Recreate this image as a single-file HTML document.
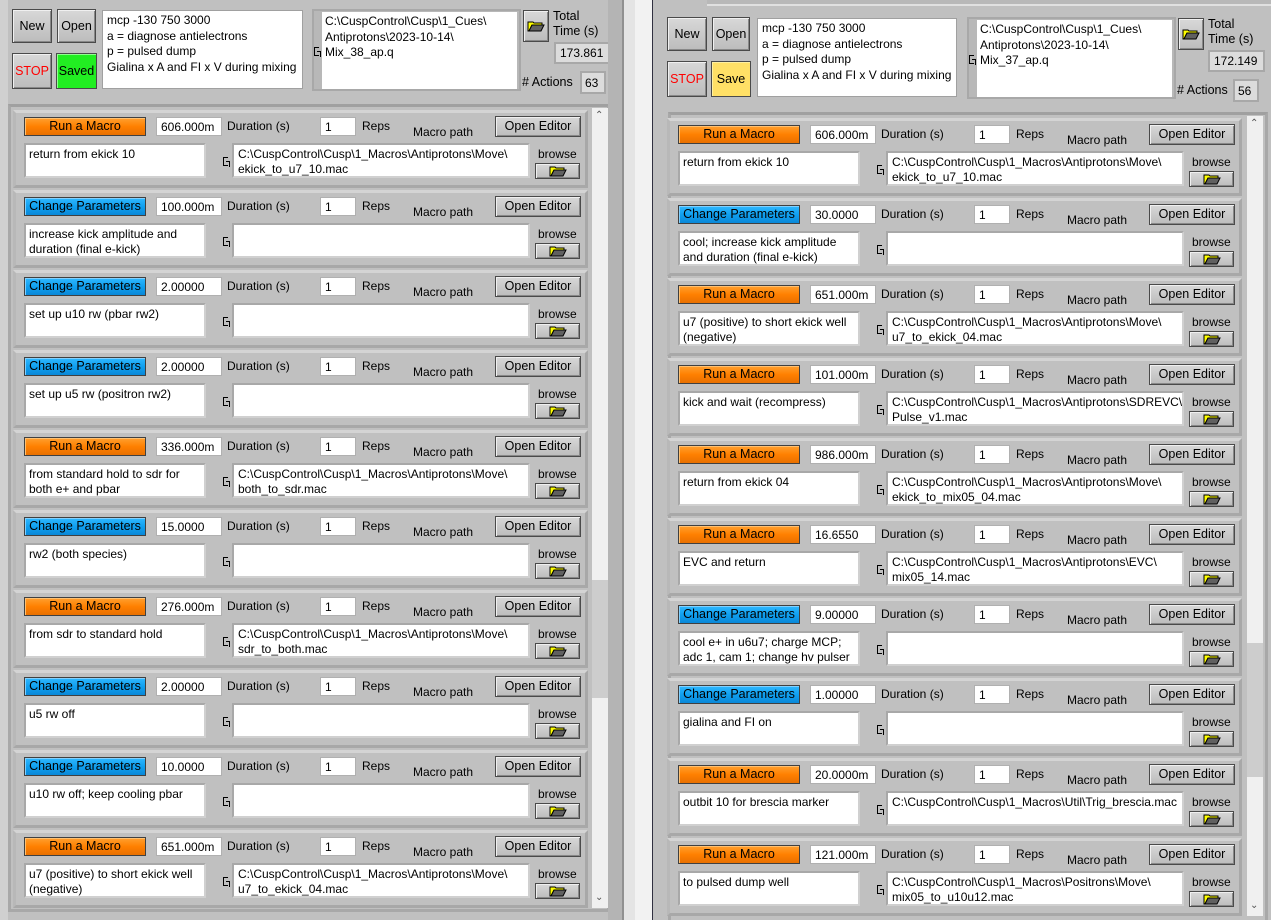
<!DOCTYPE html><html style="height:920px;overflow:hidden"><head><meta charset="utf-8"><style>
*{box-sizing:border-box;margin:0;padding:0}
body{width:1271px;height:920px;overflow:hidden;background:#c0c0c0;font-family:"Liberation Sans",sans-serif;font-size:12px;color:#000;position:relative}
.a{position:absolute}
.win{position:absolute;top:0;height:920px;background:#c0c0c0}
.btn{position:absolute;background:linear-gradient(#d8d8d8,#bcbcbc);border:1px solid #4a4a4a;box-shadow:inset 1px 1px 0 #f0f0f0,inset -1px -1px 0 #888;text-align:center;font-size:12.5px}
.box{position:absolute;background:#fff;border:1px solid #a0a0a0;padding:2px 4px;line-height:15.5px;white-space:nowrap;overflow:hidden}
.row{position:absolute;width:575px;height:78px;background:#c0c0c0;border:3px solid #a8a8a8;border-top-color:#d4d4d4;border-left-color:#b8b8b8}
.row>*{position:absolute}
.k{left:8px;top:4px;width:122px;height:19px;line-height:17px;text-align:center;font-size:12.5px;border:1px solid #404040}
.run{background:linear-gradient(#ffa030,#ff8000 50%,#e87000);box-shadow:inset 1px 1px 0 #ffc070}
.chg{background:linear-gradient(#30b8ff,#10a0f0 50%,#0a88d8);box-shadow:inset 1px 1px 0 #80d0ff}
.dur{left:140px;top:4px;width:66px;height:19px;background:#fff;padding:2px 4px;border:1px solid #b0b0b0}
.dl{left:211px;top:6px}
.rep{left:304px;top:4px;width:36px;height:19px;background:#fff;padding:2px 4px;border:1px solid #b0b0b0}
.rl{left:346px;top:6px}
.mp{left:397px;top:12px}
.oe{left:479px;top:3px;width:86px;height:21px;line-height:19px}
.desc{left:8px;top:30px;width:182px;height:35px;background:#fff;padding:2px 3px;line-height:15px;border:2px solid #a8a8a8;border-right-color:#d0d0d0;border-bottom-color:#d0d0d0}
.ic{left:207px;top:44px;width:5px;height:9px;border:1px solid #000;border-width:1px 0 1px 1px}
.ic:after{content:"";position:absolute;left:2px;top:3px;width:3px;height:5px;border:1px solid #000;border-width:1px 1px 0 0}
.path{left:216px;top:30px;width:298px;height:35px;background:#fff;padding:2px 4px;line-height:15px;border:2px solid #a8a8a8;border-right-color:#d0d0d0;border-bottom-color:#d0d0d0;white-space:nowrap;overflow:hidden}
.bl{left:522px;top:34px}
.fb{left:519px;top:50px;width:45px;height:16px}
.fb svg{position:absolute;left:13px;top:2px}
.sb{position:absolute;width:16px;background:#f0f0f0}
.th{position:absolute;left:0;width:16px;background:#cdcdcd}
.ar{position:absolute;left:3px;font-size:10px;color:#555}
</style></head><body>
<svg width="0" height="0" style="position:absolute"><defs><symbol id="f" viewBox="0 0 18 11"><path d="M1 1h5l1 1h8v2H5L2 10H1z" fill="#ffff00" stroke="#000" stroke-width="1"/><path d="M2 10l3-6h12l-3 6z" fill="#606060" stroke="#000" stroke-width="1"/></symbol></defs></svg>

<div class="win" style="left:0;width:622px;border-left:8px solid #d0d0d0"></div>
<div class="btn" style="left:12px;top:9px;width:40px;height:34px;line-height:32px">New</div>
<div class="btn" style="left:57px;top:9px;width:39px;height:34px;line-height:32px">Open</div>
<div class="btn" style="left:12px;top:53px;width:40px;height:36px;line-height:34px;color:#f00">STOP</div>
<div class="btn" style="left:56px;top:53px;width:41px;height:36px;line-height:34px;background:#22ee22;box-shadow:inset 1px 1px 0 #90ff90">Saved</div>
<div class="box" style="left:102px;top:10px;width:201px;height:79px">mcp -130 750 3000<br>a = diagnose antielectrons<br>p = pulsed dump<br>Gialina x A and FI x V during mixing</div>
<div class="a" style="left:312px;top:9px;width:209px;height:82px;background:#b8b8b8;border:2px solid #a8a8a8"></div>
<div class="a" style="left:322px;top:12px;width:195px;height:77px;background:#fff;padding:2px 3px;line-height:15.5px">C:\CuspControl\Cusp\1_Cues\<br>Antiprotons\2023-10-14\<br>Mix_38_ap.q</div>
<div class="a ic" style="left:314px;top:47px"></div>
<div class="btn" style="left:523px;top:10px;width:26px;height:32px"><svg width="18" height="11" style="margin-top:10px"><use href="#f"/></svg></div>
<div class="a" style="left:553px;top:9px;line-height:15px;font-size:12.5px">Total<br>Time (s)</div>
<div class="a" style="left:554px;top:42px;width:57px;height:22px;background:#dcdcdc;border:2px solid #a8a8a8;padding:2px 4px">173.861</div>
<div class="a" style="left:522px;top:75px;font-size:12.5px"># Actions</div>
<div class="a" style="left:580px;top:71px;width:26px;height:23px;background:#dcdcdc;border:2px solid #a8a8a8;padding:3px 3px">63</div>
<div class="a" style="left:8px;top:104px;width:602px;height:808px;border:3px solid #a8a8a8;border-top-color:#a0a0a0"></div>
<div class="sb" style="left:592px;top:108px;height:800px"><div class="th" style="top:472px;height:118px"></div><div class="ar" style="top:2px">&#8963;</div><div class="ar" style="top:784px">&#8964;</div></div>

<div class="row" style="left:13px;top:110px"><div class="k run">Run a Macro</div><div class="dur">606.000m</div><div class="dl">Duration (s)</div><div class="rep">1</div><div class="rl">Reps</div><div class="mp">Macro path</div><div class="btn oe">Open Editor</div><div class="desc">return from ekick 10</div><div class="ic"></div><div class="path">C:\CuspControl\Cusp\1_Macros\Antiprotons\Move\<br>ekick_to_u7_10.mac</div><div class="bl">browse</div><div class="btn fb"><svg width="18" height="11"><use href="#f"/></svg></div></div>
<div class="row" style="left:13px;top:190px"><div class="k chg">Change Parameters</div><div class="dur">100.000m</div><div class="dl">Duration (s)</div><div class="rep">1</div><div class="rl">Reps</div><div class="mp">Macro path</div><div class="btn oe">Open Editor</div><div class="desc">increase kick amplitude and<br>duration (final e-kick)</div><div class="ic"></div><div class="path"></div><div class="bl">browse</div><div class="btn fb"><svg width="18" height="11"><use href="#f"/></svg></div></div>
<div class="row" style="left:13px;top:270px"><div class="k chg">Change Parameters</div><div class="dur">2.00000</div><div class="dl">Duration (s)</div><div class="rep">1</div><div class="rl">Reps</div><div class="mp">Macro path</div><div class="btn oe">Open Editor</div><div class="desc">set up u10 rw (pbar rw2)</div><div class="ic"></div><div class="path"></div><div class="bl">browse</div><div class="btn fb"><svg width="18" height="11"><use href="#f"/></svg></div></div>
<div class="row" style="left:13px;top:350px"><div class="k chg">Change Parameters</div><div class="dur">2.00000</div><div class="dl">Duration (s)</div><div class="rep">1</div><div class="rl">Reps</div><div class="mp">Macro path</div><div class="btn oe">Open Editor</div><div class="desc">set up u5 rw (positron rw2)</div><div class="ic"></div><div class="path"></div><div class="bl">browse</div><div class="btn fb"><svg width="18" height="11"><use href="#f"/></svg></div></div>
<div class="row" style="left:13px;top:430px"><div class="k run">Run a Macro</div><div class="dur">336.000m</div><div class="dl">Duration (s)</div><div class="rep">1</div><div class="rl">Reps</div><div class="mp">Macro path</div><div class="btn oe">Open Editor</div><div class="desc">from standard hold to sdr for<br>both e+ and pbar</div><div class="ic"></div><div class="path">C:\CuspControl\Cusp\1_Macros\Antiprotons\Move\<br>both_to_sdr.mac</div><div class="bl">browse</div><div class="btn fb"><svg width="18" height="11"><use href="#f"/></svg></div></div>
<div class="row" style="left:13px;top:510px"><div class="k chg">Change Parameters</div><div class="dur">15.0000</div><div class="dl">Duration (s)</div><div class="rep">1</div><div class="rl">Reps</div><div class="mp">Macro path</div><div class="btn oe">Open Editor</div><div class="desc">rw2 (both species)</div><div class="ic"></div><div class="path"></div><div class="bl">browse</div><div class="btn fb"><svg width="18" height="11"><use href="#f"/></svg></div></div>
<div class="row" style="left:13px;top:590px"><div class="k run">Run a Macro</div><div class="dur">276.000m</div><div class="dl">Duration (s)</div><div class="rep">1</div><div class="rl">Reps</div><div class="mp">Macro path</div><div class="btn oe">Open Editor</div><div class="desc">from sdr to standard hold</div><div class="ic"></div><div class="path">C:\CuspControl\Cusp\1_Macros\Antiprotons\Move\<br>sdr_to_both.mac</div><div class="bl">browse</div><div class="btn fb"><svg width="18" height="11"><use href="#f"/></svg></div></div>
<div class="row" style="left:13px;top:670px"><div class="k chg">Change Parameters</div><div class="dur">2.00000</div><div class="dl">Duration (s)</div><div class="rep">1</div><div class="rl">Reps</div><div class="mp">Macro path</div><div class="btn oe">Open Editor</div><div class="desc">u5 rw off</div><div class="ic"></div><div class="path"></div><div class="bl">browse</div><div class="btn fb"><svg width="18" height="11"><use href="#f"/></svg></div></div>
<div class="row" style="left:13px;top:750px"><div class="k chg">Change Parameters</div><div class="dur">10.0000</div><div class="dl">Duration (s)</div><div class="rep">1</div><div class="rl">Reps</div><div class="mp">Macro path</div><div class="btn oe">Open Editor</div><div class="desc">u10 rw off; keep cooling pbar</div><div class="ic"></div><div class="path"></div><div class="bl">browse</div><div class="btn fb"><svg width="18" height="11"><use href="#f"/></svg></div></div>
<div class="row" style="left:13px;top:830px"><div class="k run">Run a Macro</div><div class="dur">651.000m</div><div class="dl">Duration (s)</div><div class="rep">1</div><div class="rl">Reps</div><div class="mp">Macro path</div><div class="btn oe">Open Editor</div><div class="desc">u7 (positive) to short ekick well<br>(negative)</div><div class="ic"></div><div class="path">C:\CuspControl\Cusp\1_Macros\Antiprotons\Move\<br>u7_to_ekick_04.mac</div><div class="bl">browse</div><div class="btn fb"><svg width="18" height="11"><use href="#f"/></svg></div></div>

<div class="a" style="left:608px;top:0;width:14px;height:920px;background:#b4b4b4"></div>
<div class="a" style="left:622px;top:0;width:2px;height:920px;background:#909090"></div>
<div class="a" style="left:624px;top:0;width:11px;height:920px;background:#e4e4e4"></div>
<div class="a" style="left:635px;top:0;width:17px;height:920px;background:#f2f2f2"></div>
<div class="a" style="left:652px;top:0;width:1px;height:920px;background:#303040"></div>
<div class="a" style="left:653px;top:0;width:15px;height:920px;background:#c0c0c0"></div>
<div class="a" style="left:707px;top:0;width:564px;height:6px;background:#b8b8b8;border-bottom:2px solid #e0e0e0"></div>

<div class="btn" style="left:667px;top:17px;width:40px;height:34px;line-height:32px">New</div>
<div class="btn" style="left:712px;top:17px;width:38px;height:34px;line-height:32px">Open</div>
<div class="btn" style="left:667px;top:61px;width:40px;height:36px;line-height:34px;color:#f00">STOP</div>
<div class="btn" style="left:711px;top:61px;width:40px;height:36px;line-height:34px;background:#ffe066;box-shadow:inset 1px 1px 0 #fff0a0">Save</div>
<div class="box" style="left:757px;top:18px;width:200px;height:79px">mcp -130 750 3000<br>a = diagnose antielectrons<br>p = pulsed dump<br>Gialina x A and FI x V during mixing</div>
<div class="a" style="left:967px;top:17px;width:209px;height:82px;background:#b8b8b8;border:2px solid #a8a8a8"></div>
<div class="a" style="left:977px;top:20px;width:195px;height:77px;background:#fff;padding:2px 3px;line-height:15.5px">C:\CuspControl\Cusp\1_Cues\<br>Antiprotons\2023-10-14\<br>Mix_37_ap.q</div>
<div class="a ic" style="left:969px;top:55px"></div>
<div class="btn" style="left:1178px;top:18px;width:26px;height:32px"><svg width="18" height="11" style="margin-top:10px"><use href="#f"/></svg></div>
<div class="a" style="left:1208px;top:17px;line-height:15px;font-size:12.5px">Total<br>Time (s)</div>
<div class="a" style="left:1208px;top:50px;width:57px;height:22px;background:#dcdcdc;border:2px solid #a8a8a8;padding:2px 4px">172.149</div>
<div class="a" style="left:1177px;top:83px;font-size:12.5px"># Actions</div>
<div class="a" style="left:1233px;top:79px;width:26px;height:23px;background:#dcdcdc;border:2px solid #a8a8a8;padding:3px 3px">56</div>
<div class="a" style="left:668px;top:112px;width:600px;height:808px;border:3px solid #a8a8a8;border-top-color:#a0a0a0;border-bottom:none"></div>
<div class="sb" style="left:1247px;top:116px;height:800px"><div class="th" style="top:527px;height:134px"></div><div class="ar" style="top:2px">&#8963;</div><div class="ar" style="top:784px">&#8964;</div></div>

<div class="row" style="left:667px;top:118px"><div class="k run">Run a Macro</div><div class="dur">606.000m</div><div class="dl">Duration (s)</div><div class="rep">1</div><div class="rl">Reps</div><div class="mp">Macro path</div><div class="btn oe">Open Editor</div><div class="desc">return from ekick 10</div><div class="ic"></div><div class="path">C:\CuspControl\Cusp\1_Macros\Antiprotons\Move\<br>ekick_to_u7_10.mac</div><div class="bl">browse</div><div class="btn fb"><svg width="18" height="11"><use href="#f"/></svg></div></div>
<div class="row" style="left:667px;top:198px"><div class="k chg">Change Parameters</div><div class="dur">30.0000</div><div class="dl">Duration (s)</div><div class="rep">1</div><div class="rl">Reps</div><div class="mp">Macro path</div><div class="btn oe">Open Editor</div><div class="desc">cool; increase kick amplitude<br>and duration (final e-kick)</div><div class="ic"></div><div class="path"></div><div class="bl">browse</div><div class="btn fb"><svg width="18" height="11"><use href="#f"/></svg></div></div>
<div class="row" style="left:667px;top:278px"><div class="k run">Run a Macro</div><div class="dur">651.000m</div><div class="dl">Duration (s)</div><div class="rep">1</div><div class="rl">Reps</div><div class="mp">Macro path</div><div class="btn oe">Open Editor</div><div class="desc">u7 (positive) to short ekick well<br>(negative)</div><div class="ic"></div><div class="path">C:\CuspControl\Cusp\1_Macros\Antiprotons\Move\<br>u7_to_ekick_04.mac</div><div class="bl">browse</div><div class="btn fb"><svg width="18" height="11"><use href="#f"/></svg></div></div>
<div class="row" style="left:667px;top:358px"><div class="k run">Run a Macro</div><div class="dur">101.000m</div><div class="dl">Duration (s)</div><div class="rep">1</div><div class="rl">Reps</div><div class="mp">Macro path</div><div class="btn oe">Open Editor</div><div class="desc">kick and wait (recompress)</div><div class="ic"></div><div class="path">C:\CuspControl\Cusp\1_Macros\Antiprotons\SDREVC\<br>Pulse_v1.mac</div><div class="bl">browse</div><div class="btn fb"><svg width="18" height="11"><use href="#f"/></svg></div></div>
<div class="row" style="left:667px;top:438px"><div class="k run">Run a Macro</div><div class="dur">986.000m</div><div class="dl">Duration (s)</div><div class="rep">1</div><div class="rl">Reps</div><div class="mp">Macro path</div><div class="btn oe">Open Editor</div><div class="desc">return from ekick 04</div><div class="ic"></div><div class="path">C:\CuspControl\Cusp\1_Macros\Antiprotons\Move\<br>ekick_to_mix05_04.mac</div><div class="bl">browse</div><div class="btn fb"><svg width="18" height="11"><use href="#f"/></svg></div></div>
<div class="row" style="left:667px;top:518px"><div class="k run">Run a Macro</div><div class="dur">16.6550</div><div class="dl">Duration (s)</div><div class="rep">1</div><div class="rl">Reps</div><div class="mp">Macro path</div><div class="btn oe">Open Editor</div><div class="desc">EVC and return</div><div class="ic"></div><div class="path">C:\CuspControl\Cusp\1_Macros\Antiprotons\EVC\<br>mix05_14.mac</div><div class="bl">browse</div><div class="btn fb"><svg width="18" height="11"><use href="#f"/></svg></div></div>
<div class="row" style="left:667px;top:598px"><div class="k chg">Change Parameters</div><div class="dur">9.00000</div><div class="dl">Duration (s)</div><div class="rep">1</div><div class="rl">Reps</div><div class="mp">Macro path</div><div class="btn oe">Open Editor</div><div class="desc">cool e+ in u6u7; charge MCP;<br>adc 1, cam 1; change hv pulser</div><div class="ic"></div><div class="path"></div><div class="bl">browse</div><div class="btn fb"><svg width="18" height="11"><use href="#f"/></svg></div></div>
<div class="row" style="left:667px;top:678px"><div class="k chg">Change Parameters</div><div class="dur">1.00000</div><div class="dl">Duration (s)</div><div class="rep">1</div><div class="rl">Reps</div><div class="mp">Macro path</div><div class="btn oe">Open Editor</div><div class="desc">gialina and FI on</div><div class="ic"></div><div class="path"></div><div class="bl">browse</div><div class="btn fb"><svg width="18" height="11"><use href="#f"/></svg></div></div>
<div class="row" style="left:667px;top:758px"><div class="k run">Run a Macro</div><div class="dur">20.0000m</div><div class="dl">Duration (s)</div><div class="rep">1</div><div class="rl">Reps</div><div class="mp">Macro path</div><div class="btn oe">Open Editor</div><div class="desc">outbit 10 for brescia marker</div><div class="ic"></div><div class="path">C:\CuspControl\Cusp\1_Macros\Util\Trig_brescia.mac</div><div class="bl">browse</div><div class="btn fb"><svg width="18" height="11"><use href="#f"/></svg></div></div>
<div class="row" style="left:667px;top:838px"><div class="k run">Run a Macro</div><div class="dur">121.000m</div><div class="dl">Duration (s)</div><div class="rep">1</div><div class="rl">Reps</div><div class="mp">Macro path</div><div class="btn oe">Open Editor</div><div class="desc">to pulsed dump well</div><div class="ic"></div><div class="path">C:\CuspControl\Cusp\1_Macros\Positrons\Move\<br>mix05_to_u10u12.mac</div><div class="bl">browse</div><div class="btn fb"><svg width="18" height="11"><use href="#f"/></svg></div></div>
</body></html>
